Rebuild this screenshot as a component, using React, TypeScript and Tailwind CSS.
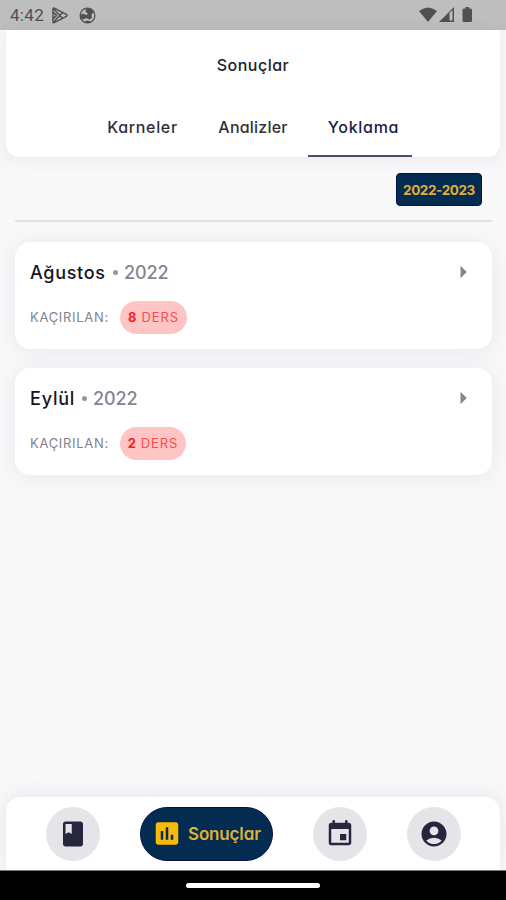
import type { ReactNode } from 'react';
import {
  MdAccountCircle,
  MdArrowRight,
  MdAssessment,
  MdClass,
  MdEvent,
} from 'react-icons/md';

const months = [
  {
    name: 'Ağustos',
    nameClass: 'w-[76px] tracking-[0.7px]',
    year: '2022',
    missed: 8,
    pillClass: 'w-[67px]',
  },
  {
    name: 'Eylül',
    nameClass: 'w-[45px] tracking-[0.8px]',
    year: '2022',
    missed: 2,
    pillClass: 'w-[66px]',
  },
];

function StatusBar() {
  return (
    <div className="flex h-[30px] shrink-0 items-center bg-[#bebebe] pl-[10px] text-[#505050]">
      <span className="w-[35px] pt-[2px] font-[Roboto] text-[17px] tracking-[0.3px] whitespace-nowrap">
        4:42
      </span>
      <svg
        className="ml-[6px] h-[17px] w-[18px]"
        viewBox="0 0 18 17"
        fill="none"
        stroke="currentColor"
        strokeWidth="1.5"
        strokeLinejoin="round"
      >
        <path d="M2 1.8Q2 .8 3.2 1.2L15.4 7.4Q16.6 8.3 15.4 9.3L3.2 15.6Q2 16 2 15Z" />
        <path d="M2.3 1.5 11.5 11.4M2.3 15.4 11.5 5.4" />
        <path d="M2 5 5.5 8.4 2 12" />
      </svg>
      <svg className="ml-[10px] size-[17px]" viewBox="0 0 17 17">
        <circle
          cx="8.5"
          cy="8.5"
          r="7.4"
          fill="none"
          stroke="currentColor"
          strokeWidth="1.2"
        />
        <path
          d="M7 1.500 12.500 2 15 5 12.500 7.500 9 7 6.500 4.500ZM1 8 4 6.500 7 8 7.500 11 4.500 12.500 1.700 11.500ZM9 7 12.500 7.500 13 11 10.500 12.500 7.500 11 7 8ZM6 14.500 8 13.500 11 14 10.500 16 7 16Z"
          fill="currentColor"
        />
      </svg>
      <svg
        className="ml-[323px] h-[16px] w-[56px]"
        viewBox="0 0 56 16"
        fill="currentColor"
      >
        <path d="M0 4Q9-3 18 4L9 15Z" />
        <path d="M20 15 35 0V15Z" />
        <path d="M30.5 6 33.5 3V13.5H30.5Z" fill="#bebebe" />
        <path d="M45 1.5H46.500V0H50V1.500H51.500Q53 1.500 53 3V13.500Q53 15 51.500 15H45Q43.500 15 43.500 13.500V3Q43.500 1.500 45 1.500Z" />
      </svg>
    </div>
  );
}

function Header() {
  return (
    <header className="mx-[6px] h-[127px] shrink-0 rounded-b-[13px] bg-white shadow-[0_2px_16px_rgba(80,80,140,0.09)]">
      <h1 className="flex h-[70px] items-center justify-center text-[16px] font-medium tracking-[0.5px] text-[#20202c]">
        Sonuçlar
      </h1>
      <nav className="flex h-[57px] pl-[81px] text-[16px] font-medium text-[#30303c]">
        <div className="flex w-[111px] justify-center pt-[15px] tracking-[0.65px]">
          Karneler
        </div>
        <div className="flex w-[110px] justify-center pt-[15px] tracking-[0.2px]">
          Analizler
        </div>
        <div className="flex w-[104px] justify-center border-b-2 border-[#474f68] pt-[15px] pl-[7px] tracking-[0.7px] text-[#1c1c46]">
          Yoklama
        </div>
      </nav>
    </header>
  );
}

function MonthCard({ month }: { month: (typeof months)[number] }) {
  return (
    <article className="h-[107px] rounded-[15px] bg-white px-[15px] pt-[15px] shadow-[0_2px_18px_rgba(80,80,140,0.09)]">
      <div className="flex h-[30px] items-center text-[18px] font-medium whitespace-nowrap">
        <span className={`${month.nameClass} text-[#15151f]`}>
          {month.name}
        </span>
        <span className="mr-[6px] ml-[7px] size-[5px] rounded-full bg-[#9696a4]" />
        <span className="tracking-[-0.1px] text-[#858592]">{month.year}</span>
        <MdArrowRight className="-mr-px ml-auto size-[30px] text-[#85858f]" />
      </div>
      <div className="mt-[14px] flex h-[33px] items-center text-[13px] whitespace-nowrap">
        <span className="w-[90px] pt-px tracking-[0.7px] text-[#82828d]">
          KAÇIRILAN:
        </span>
        <span
          className={`${month.pillClass} flex h-[33px] items-center justify-center gap-[4px] rounded-full bg-[#ffc5c5] pt-px tracking-[0.9px] text-[#fa4a50]`}
        >
          <b className="text-[#fb1b24]">{month.missed}</b>
          DERS
        </span>
      </div>
    </article>
  );
}

function NavButton({ children }: { children: ReactNode }) {
  return (
    <button className="flex size-[54px] items-center justify-center rounded-full bg-[#e5e4e9] text-[#26263f]">
      {children}
    </button>
  );
}

function BottomNav() {
  return (
    <nav className="mx-[6px] flex h-[73px] shrink-0 items-center rounded-t-[15px] bg-white pl-[40px] shadow-[0_-2px_18px_rgba(80,80,140,0.1)]">
      <NavButton>
        <MdClass className="size-[30px]" />
      </NavButton>
      <button className="ml-[40px] flex h-[54px] w-[133px] items-center rounded-full border border-[#08124a] bg-[#042b50] pl-[11px] text-[#ddb13a]">
        <span className="flex size-[30px] items-center justify-center">
          <MdAssessment className="size-[31px] text-[#f9bb0b]" />
        </span>
        <span className="ml-[6px] pt-[2px] text-[17px] font-semibold tracking-[-0.15px]">
          Sonuçlar
        </span>
      </button>
      <div className="ml-[40px] flex gap-[40px]">
        <NavButton>
          <MdEvent className="size-[30px]" />
        </NavButton>
        <NavButton>
          <MdAccountCircle className="size-[30px]" />
        </NavButton>
      </div>
    </nav>
  );
}

export default function App() {
  return (
    <div className="flex h-[900px] w-[506px] flex-col overflow-hidden bg-[#f8f8f9] font-[Inter,sans-serif] [font-feature-settings:'cv11']">
      <StatusBar />
      <Header />
      <main className="flex-1 pt-[16px] pr-[14px] pl-[15px]">
        <div className="flex h-[49px] justify-end border-b-2 border-[#e2e2e4] pr-[10px]">
          <button className="flex h-[33px] w-[86px] items-center justify-center rounded-[4px] border border-[#08124a] bg-[#042b50] pt-px text-[13.5px] font-bold tracking-[-0.4px] text-[#e0ae35]">
            2022-2023
          </button>
        </div>
        <section className="mt-[20px] flex flex-col gap-[19px]">
          {months.map((month) => (
            <MonthCard key={month.name} month={month} />
          ))}
        </section>
      </main>
      <BottomNav />
      <div className="flex h-[30px] shrink-0 justify-center border-t border-[#777] bg-black pt-[12px]">
        <div className="h-[5px] w-[134px] rounded-full bg-white" />
      </div>
    </div>
  );
}
